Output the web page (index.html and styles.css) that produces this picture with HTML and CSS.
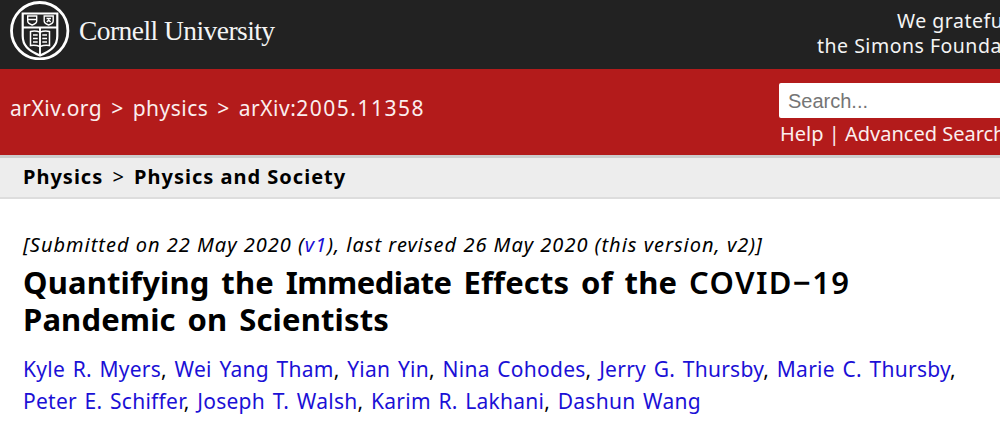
FILE: index.html
```html
<!DOCTYPE html>
<html lang="en">
<head>
    <meta charset="utf-8">
    <title>[2005.11358] Quantifying the Immediate Effects of the COVID-19 Pandemic on Scientists</title>
    <link rel="stylesheet" href="styles.css">
</head>
<body>
    <header>
        <div class="cu-bar">
            <a class="cu-logo" href="#">
                <svg class="cu-seal" viewBox="0 0 60 60" fill="none" stroke="#fff">
                    <circle cx="29.700" cy="30.700" r="28.200" stroke-width="2.800"/>
                    <path d="M12.700 13.500h34.600v22.500c0 9-5 14.500-17.300 19.500C17.700 50.500 12.700 45 12.700 36z" stroke-width="2.200"/>
                    <path d="M12.700 27.500h34.600M30 27.500V55" stroke-width="1.900"/>
                    <path d="M17.700 16h9v5q0 2.500-4.500 4-4.500-1.500-4.500-4zM34.200 16h9v5q0 2.500-4.500 4-4.500-1.500-4.500-4z" stroke-width="1.400"/>
                    <path d="M18 19.500h8.500M36.500 18.500h4.500M36.800 22l1.900-2 1.900 2" stroke-width="1.400"/>
                    <path d="M20.500 31.500q5-1 9.500.6 4.500-1.600 9.500-.6v14q-5-.8-9.500 1-4.500-1.800-9.500-1z" stroke-width="1.500"/>
                    <path d="M23 35h4.700M23 38.500h4.700M23 42h4.700M32.300 35H37M32.300 38.500H37M32.300 42H37" stroke-width="1.600"/>
                </svg>
                <span class="cu-name">Cornell University</span>
            </a>
            <div class="support">
                <div class="support-top">We gratefully acknowledge support from</div>
                <div class="support-bottom">the Simons Foundation and member institutions.</div>
            </div>
        </div>
        <div class="arxiv-bar">
            <div class="breadcrumbs"><a href="#">arXiv.org</a> &gt; <a href="#">physics</a> &gt; arXiv:<span class="paper-id">2005.11358</span></div>
            <div class="search">
                <input class="search-input" type="text" placeholder="Search...">
                <div class="search-links"><a href="#">Help</a> | <a href="#">Advanced Search</a></div>
            </div>
        </div>
    </header>
    <div class="subject"><b>Physics</b><span class="sep"> &gt; </span><b>Physics and Society</b></div>
    <main class="abs">
        <div class="dateline">[Submitted on 22 May 2020 (<a href="#">v1</a>), last revised 26 May 2020 (this version, v2)]</div>
        <h1 class="title">Quantifying the <span class="tight">Immediate</span> Effects of the <span class="caps">COVID&minus;19</span><br>Pandemic on Scientists</h1>
        <div class="authors">
            <a href="#">Kyle R. Myers</a>, <a href="#">Wei Yang Tham</a>, <a href="#">Yian Yin</a>, <a href="#">Nina Cohodes</a>, <a href="#">Jerry G. Thursby</a>, <a href="#">Marie C. Thursby</a>,<br>
            <a href="#">Peter E. Schiffer</a>, <a href="#">Joseph T. Walsh</a>, <a href="#">Karim R. Lakhani</a>, <a href="#">Dashun Wang</a>
        </div>
    </main>
</body>
</html>
```
FILE: styles.css
```css
body {
    margin: 0;
    overflow: hidden;
    background: #fff;
    color: #000;
    font-family: "Lucida Grande", "Noto Sans", "Open Sans", sans-serif;
    font-size: 20px;
}
a {
    color: inherit;
    text-decoration: none;
}
header {
    overflow: hidden;
}
.cu-bar {
    display: flex;
    height: 69px;
    background: #222;
    color: #f4f4f4;
}
.cu-logo {
    display: flex;
    flex: none;
    width: 807px;
    padding-left: 10px;
    box-sizing: border-box;
}
.cu-seal {
    width: 60px;
    height: 60px;
}
.cu-name {
    margin-left: 9px;
    font-family: "Palatino", "Liberation Serif", serif;
    font-size: 27.5px;
    letter-spacing: -0.55px;
    line-height: 62px;
}
.support {
    flex: none;
    width: 500px;
    padding: 8px 0 0 10px;
    font-size: 19.5px;
    letter-spacing: 0.5px;
    line-height: 25px;
    white-space: nowrap;
}
.support-top {
    padding-left: 80px;
}
.arxiv-bar {
    display: flex;
    height: 86px;
    background: #b31b1b;
    color: #fbeeee;
}
.breadcrumbs {
    flex: none;
    width: 779px;
    padding-left: 10px;
    box-sizing: border-box;
    font-size: 21px;
    letter-spacing: 0.5px;
    word-spacing: 3px;
    line-height: 79px;
}
.paper-id {
    letter-spacing: 1.5px;
}
.search {
    flex: none;
    width: 300px;
    padding-top: 14px;
}
.search-input {
    display: block;
    width: 300px;
    height: 35px;
    padding: 2px 9px 0;
    box-sizing: border-box;
    border: 0;
    border-radius: 2px;
    font-family: "Liberation Sans", sans-serif;
    font-size: 20px;
}
.search-input::placeholder {
    color: #757575;
}
.search-links {
    padding-left: 1px;
    line-height: 32px;
}
.subject {
    height: 44px;
    padding-left: 23px;
    box-sizing: border-box;
    border-top: 3px solid #ccc;
    border-bottom: 2px solid #ddd;
    background: #ededed;
    font-size: 20px;
    letter-spacing: 1px;
    line-height: 38px;
}
.sep {
    word-spacing: 3px;
}
.abs {
    padding: 31px 23px 0;
    white-space: nowrap;
}
.abs a {
    color: #1b10d6;
}
.dateline {
    font-size: 20px;
    font-style: italic;
    letter-spacing: 1px;
    line-height: 30px;
}
.title {
    margin: 4px 0 0;
    font-size: 31px;
    font-weight: 700;
    letter-spacing: 0.15px;
    word-spacing: 3.6px;
    line-height: 37px;
}
.tight {
    letter-spacing: -0.5px;
}
.caps {
    font-weight: 600;
    letter-spacing: 1.4px;
}
.authors {
    margin-top: 15px;
    font-size: 21px;
    letter-spacing: 0.26px;
    word-spacing: 1.9px;
    line-height: 32px;
}
```
